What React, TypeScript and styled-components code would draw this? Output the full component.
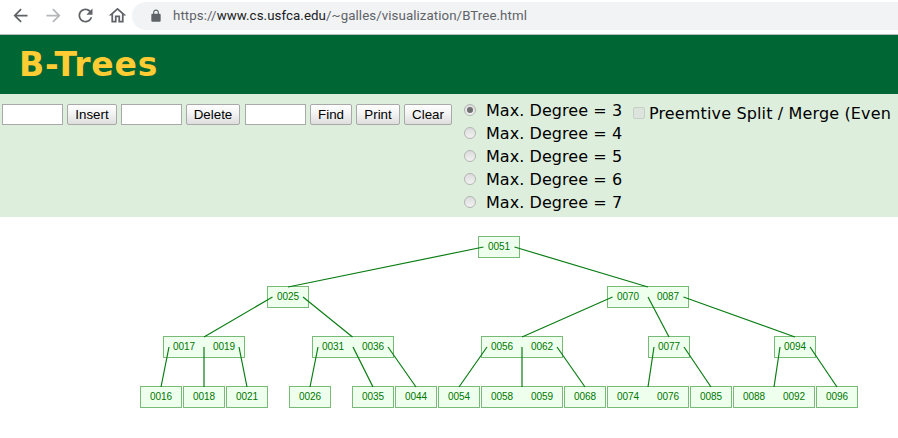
import React from "react";
import styled, { createGlobalStyle } from "styled-components";

const Global = createGlobalStyle`
  html, body {
    margin: 0;
    padding: 0;
    background: #fff;
    overflow: hidden;
  }
`;

const Page = styled.div`
  width: 898px;
  height: 438px;
  overflow: hidden;
  display: flex;
  flex-direction: column;
`;

const BrowserBar = styled.div`
  height: 35px;
  flex: none;
  box-sizing: border-box;
  display: flex;
  align-items: center;
  padding: 0 0 3px 9px;
  background: #fff;
  border-bottom: 1px solid #b9bbbd;
`;

const NavButton = styled.div<{ $gap: number }>`
  width: 22px;
  height: 22px;
  flex: none;
  margin-right: ${(p) => p.$gap}px;
  display: flex;
  align-items: center;
  justify-content: center;
`;

const UrlPill = styled.div`
  flex: 1;
  height: 28px;
  margin-left: 4px;
  margin-right: -40px;
  border-radius: 14px;
  background: #f1f3f4;
  display: flex;
  align-items: center;
  padding-left: 17px;
  gap: 10px;
`;

const Url = styled.div`
  font-family: Roboto, "Liberation Sans", sans-serif;
  font-size: 13.3px;
  letter-spacing: 0.07px;
  color: #5f6368;
  white-space: nowrap;
  b {
    font-weight: 400;
    color: #202124;
  }
`;

const Header = styled.div`
  height: 59px;
  flex: none;
  box-sizing: border-box;
  background: #006633;
  padding-left: 19px;
  display: flex;
  align-items: center;
`;

const Title = styled.h1`
  margin: 0;
  font-family: "DejaVu Sans", Verdana, sans-serif;
  font-size: 33px;
  letter-spacing: 0.8px;
  font-weight: 700;
  color: #ffcc33;
`;

const Controls = styled.div`
  height: 123px;
  flex: none;
  box-sizing: border-box;
  background: #ddeedd;
  display: flex;
  align-items: flex-start;
  padding: 10px 0 0 2px;
`;

const TextField = styled.input`
  width: 61px;
  height: 21px;
  box-sizing: border-box;
  flex: none;
  margin: 0 4px 0 0;
  padding: 1px 2px;
  background: #fff;
  border: 1px solid #a9a9a9;
`;

const ActionButton = styled.button<{ $w: number; $gap?: number }>`
  width: ${(p) => p.$w}px;
  height: 21px;
  box-sizing: border-box;
  flex: none;
  margin: 0 ${(p) => p.$gap ?? 4}px 0 0;
  padding: 0;
  font-family: "Liberation Sans", Arial, sans-serif;
  font-size: 13.33px;
  color: #000;
  background: linear-gradient(#fff, #f3f3f3 45%, #dedede);
  border: 1px solid #a9a9a9;
  border-radius: 2px;
`;

const DegreeList = styled.div`
  display: flex;
  flex-direction: column;
  margin-top: -5px;
  margin-left: 12px;
  width: 169px;
  flex: none;
`;

const DegreeRow = styled.label`
  height: 23px;
  display: flex;
  align-items: center;
  gap: 10px;
  font-family: "DejaVu Sans", Verdana, sans-serif;
  font-size: 16px;
  letter-spacing: 0.06px;
  color: #000;
  white-space: nowrap;
`;

const Radio = styled.input`
  appearance: none;
  width: 12px;
  height: 12px;
  flex: none;
  margin: -2px 0 0 0;
  box-sizing: border-box;
  border-radius: 50%;
  border: 1px solid #b4b4b4;
  background: linear-gradient(#dcdcdc, #f2f2f2);
  position: relative;
  &:checked::after {
    content: "";
    position: absolute;
    left: 2px;
    top: 2px;
    width: 6px;
    height: 6px;
    border-radius: 50%;
    background: #6f6f6f;
  }
`;

const SplitRow = styled.label`
  display: flex;
  align-items: center;
  gap: 4px;
  height: 20px;
  margin-top: -1px;
  font-family: "DejaVu Sans", Verdana, sans-serif;
  font-size: 16px;
  letter-spacing: 0.14px;
  color: #000;
  white-space: nowrap;
`;

const Check = styled.input`
  appearance: none;
  width: 12px;
  height: 12px;
  flex: none;
  margin: 0;
  box-sizing: border-box;
  border: 1px solid #c6d0c6;
  border-radius: 2px;
  background: #dde3dd;
`;

const Canvas = styled.div`
  position: relative;
  flex: 1;
  background: #fff;
`;

const Edges = styled.svg`
  position: absolute;
  left: 0;
  top: 0;
  pointer-events: none;
  z-index: 1;
`;

const Node = styled.div`
  position: absolute;
  box-sizing: border-box;
  height: 22px;
  display: flex;
  background: #eeffee;
  border: 1px solid #77bb77;
`;

const Key = styled.span`
  flex: 1;
  text-align: center;
  line-height: 20px;
  font-family: "Liberation Sans", Arial, sans-serif;
  font-size: 10px;
  color: #007700;
`;

const BackIcon = ({ color }: { color: string }) => (
  <svg width="21" height="21" viewBox="0 0 24 24" fill={color}>
    <path d="M20 11H7.83l5.59-5.59L12 4l-8 8 8 8 1.41-1.41L7.83 13H20v-2z" />
  </svg>
);

const ForwardIcon = ({ color }: { color: string }) => (
  <svg width="21" height="21" viewBox="0 0 24 24" fill={color}>
    <path d="M12 4l-1.41 1.41L16.17 11H4v2h12.17l-5.58 5.59L12 20l8-8z" />
  </svg>
);

const ReloadIcon = () => (
  <svg width="21" height="21" viewBox="0 0 24 24" fill="#5f6368">
    <path d="M17.65 6.35C16.2 4.9 14.21 4 12 4c-4.42 0-7.99 3.58-7.99 8s3.57 8 7.99 8c3.73 0 6.84-2.55 7.73-6h-2.08c-.82 2.33-3.04 4-5.65 4-3.31 0-6-2.69-6-6s2.69-6 6-6c1.66 0 3.14.69 4.22 1.78L13 11h7V4l-2.35 2.35z" />
  </svg>
);

const HomeIcon = () => (
  <svg width="21" height="21" viewBox="0 0 24 24" fill="#5f6368">
    <path d="M12 5.69l5 4.5V18h-2v-6H9v6H7v-7.81l5-4.5M12 3L2 12h3v8h6v-6h2v6h6v-8h3L12 3z" />
  </svg>
);

const LockIcon = () => (
  <svg width="14" height="14" viewBox="0 0 24 24" fill="#5f6368">
    <path d="M18 8h-1V6c0-2.76-2.24-5-5-5S7 3.24 7 6v2H6c-1.1 0-2 .9-2 2v10c0 1.1.9 2 2 2h12c1.1 0 2-.9 2-2V10c0-1.1-.9-2-2-2zM9 6c0-1.66 1.34-3 3-3s3 1.34 3 3v2H9V6z" />
  </svg>
);

// positions are relative to the canvas, which starts at y=217
const ROW = [19, 69, 119, 169];
const TOP = 217;

const nodes: { x: number; row: number; keys: string[] }[] = [
  { x: 478, row: 0, keys: ["0051"] },
  { x: 267, row: 1, keys: ["0025"] },
  { x: 607, row: 1, keys: ["0070", "0087"] },
  { x: 163, row: 2, keys: ["0017", "0019"] },
  { x: 312, row: 2, keys: ["0031", "0036"] },
  { x: 481, row: 2, keys: ["0056", "0062"] },
  { x: 648, row: 2, keys: ["0077"] },
  { x: 774, row: 2, keys: ["0094"] },
  { x: 140, row: 3, keys: ["0016"] },
  { x: 183, row: 3, keys: ["0018"] },
  { x: 226, row: 3, keys: ["0021"] },
  { x: 289, row: 3, keys: ["0026"] },
  { x: 352, row: 3, keys: ["0035"] },
  { x: 395, row: 3, keys: ["0044"] },
  { x: 438, row: 3, keys: ["0054"] },
  { x: 481, row: 3, keys: ["0058", "0059"] },
  { x: 564, row: 3, keys: ["0068"] },
  { x: 607, row: 3, keys: ["0074", "0076"] },
  { x: 690, row: 3, keys: ["0085"] },
  { x: 733, row: 3, keys: ["0088", "0092"] },
  { x: 816, row: 3, keys: ["0096"] },
];

// x1, y1, x2, y2 in page coordinates
const edges: number[][] = [
  [483.5, 247, 288, 287],
  [514.5, 247, 648, 287],
  [272.5, 297, 204, 337],
  [303, 297, 352.5, 337],
  [612.5, 297, 522, 337],
  [648, 297, 669, 337],
  [683.5, 297, 795, 337],
  [169, 347, 161, 387],
  [204, 347, 204, 387],
  [239, 347, 247, 387],
  [318, 347, 310, 387],
  [353, 347, 373, 387],
  [388, 347, 416, 387],
  [487, 347, 459, 387],
  [522, 347, 522, 387],
  [557, 347, 585, 387],
  [654, 347, 648, 387],
  [684, 347, 711, 387],
  [780, 347, 774, 387],
  [810, 347, 837, 387],
];

const degrees = [3, 4, 5, 6, 7];

export default function App() {
  return (
    <Page>
      <Global />
      <BrowserBar>
        <NavButton $gap={11}><BackIcon color="#5f6368" /></NavButton>
        <NavButton $gap={10}><ForwardIcon color="#b4b6b9" /></NavButton>
        <NavButton $gap={10}><ReloadIcon /></NavButton>
        <NavButton $gap={0}><HomeIcon /></NavButton>
        <UrlPill>
          <LockIcon />
          <Url>https://<b>www.cs.usfca.edu</b>/~galles/visualization/BTree.html</Url>
        </UrlPill>
      </BrowserBar>
      <Header>
        <Title>B-Trees</Title>
      </Header>
      <Controls>
        <TextField type="text" />
        <ActionButton $w={50}>Insert</ActionButton>
        <TextField type="text" />
        <ActionButton $w={54} $gap={5}>Delete</ActionButton>
        <TextField type="text" />
        <ActionButton $w={42}>Find</ActionButton>
        <ActionButton $w={44}>Print</ActionButton>
        <ActionButton $w={48} $gap={0}>Clear</ActionButton>
        <DegreeList>
          {degrees.map((d) => (
            <DegreeRow key={d}>
              <Radio type="radio" name="degree" defaultChecked={d === 3} />
              Max. Degree = {d}
            </DegreeRow>
          ))}
        </DegreeList>
        <SplitRow>
          <Check type="checkbox" />
          Preemtive Split / Merge (Even
        </SplitRow>
      </Controls>
      <Canvas>
        {nodes.map((n) => (
          <Node
            key={n.keys[0]}
            style={{ left: n.x, top: ROW[n.row], width: n.keys.length * 40 + 2 }}
          >
            {n.keys.map((k) => (
              <Key key={k}>{k}</Key>
            ))}
          </Node>
        ))}
        <Edges width="898" height="221" viewBox={`0 ${TOP} 898 221`}>
          {edges.map((e, i) => (
            <line key={i} x1={e[0]} y1={e[1]} x2={e[2]} y2={e[3]} stroke="#0a7d14" strokeWidth="1.2" />
          ))}
        </Edges>
      </Canvas>
    </Page>
  );
}
